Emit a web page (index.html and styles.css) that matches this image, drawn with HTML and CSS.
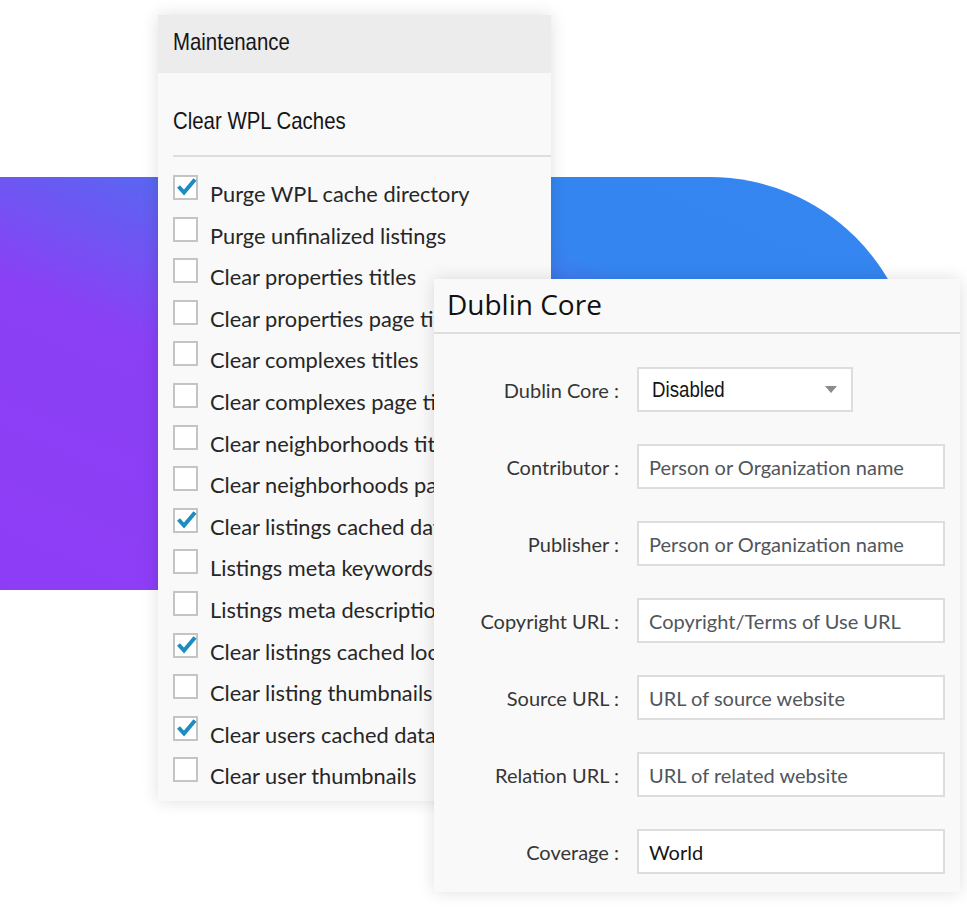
FILE: index.html
```html
<!DOCTYPE html>
<html lang="en">
<head>
<meta charset="utf-8">
<title>WPL Settings</title>
<link rel="stylesheet" href="styles.css">
</head>
<body>
<div class="stage">
  <div class="backdrop"></div>

  <section class="card maint">
    <header class="maint-head"><span class="narrow">Maintenance</span></header>
    <div class="maint-body">
      <h2 class="maint-title"><span class="narrow">Clear WPL Caches</span></h2>
      <ul class="checks">
        <li class="check-row"><span class="box checked"><svg viewBox="0 0 24 24" width="24" height="24"><path d="M3.5 11.5 L9 17.5 L20 4.5" /></svg></span><span class="check-label">Purge WPL cache directory</span></li>
        <li class="check-row"><span class="box"></span><span class="check-label">Purge unfinalized listings</span></li>
        <li class="check-row"><span class="box"></span><span class="check-label">Clear properties titles</span></li>
        <li class="check-row"><span class="box"></span><span class="check-label">Clear properties page titles</span></li>
        <li class="check-row"><span class="box"></span><span class="check-label">Clear complexes titles</span></li>
        <li class="check-row"><span class="box"></span><span class="check-label">Clear complexes page titles</span></li>
        <li class="check-row"><span class="box"></span><span class="check-label">Clear neighborhoods titles</span></li>
        <li class="check-row"><span class="box"></span><span class="check-label">Clear neighborhoods page titles</span></li>
        <li class="check-row"><span class="box checked"><svg viewBox="0 0 24 24" width="24" height="24"><path d="M3.5 11.5 L9 17.5 L20 4.5" /></svg></span><span class="check-label">Clear listings cached data</span></li>
        <li class="check-row"><span class="box"></span><span class="check-label">Listings meta keywords</span></li>
        <li class="check-row"><span class="box"></span><span class="check-label">Listings meta descriptions</span></li>
        <li class="check-row"><span class="box checked"><svg viewBox="0 0 24 24" width="24" height="24"><path d="M3.5 11.5 L9 17.5 L20 4.5" /></svg></span><span class="check-label">Clear listings cached locations</span></li>
        <li class="check-row"><span class="box"></span><span class="check-label">Clear listing thumbnails</span></li>
        <li class="check-row"><span class="box checked"><svg viewBox="0 0 24 24" width="24" height="24"><path d="M3.5 11.5 L9 17.5 L20 4.5" /></svg></span><span class="check-label">Clear users cached data</span></li>
        <li class="check-row"><span class="box"></span><span class="check-label">Clear user thumbnails</span></li>
      </ul>
    </div>
  </section>

  <section class="card dublin">
    <h1 class="dc-title">Dublin Core</h1>
    <form class="dc-form">
      <div class="dc-row">
        <label class="dc-label">Dublin Core :</label>
        <div class="dc-select"><span class="dc-select-text narrow">Disabled</span><svg class="dc-arrow" viewBox="0 0 12 7" width="12" height="7"><path d="M0 0 H12 L6 7 Z"/></svg></div>
      </div>
      <div class="dc-row">
        <label class="dc-label">Contributor :</label>
        <input class="dc-input" type="text" placeholder="Person or Organization name">
      </div>
      <div class="dc-row">
        <label class="dc-label">Publisher :</label>
        <input class="dc-input" type="text" placeholder="Person or Organization name">
      </div>
      <div class="dc-row">
        <label class="dc-label">Copyright URL :</label>
        <input class="dc-input" type="text" placeholder="Copyright/Terms of Use URL">
      </div>
      <div class="dc-row">
        <label class="dc-label">Source URL :</label>
        <input class="dc-input" type="text" placeholder="URL of source website">
      </div>
      <div class="dc-row">
        <label class="dc-label">Relation URL :</label>
        <input class="dc-input" type="text" placeholder="URL of related website">
      </div>
      <div class="dc-row">
        <label class="dc-label">Coverage :</label>
        <input class="dc-input" type="text" value="World">
      </div>
    </form>
  </section>
</div>
</body>
</html>
```

FILE: styles.css
```css
html, body {
  margin: 0;
  padding: 0;
  background: #ffffff;
}

.stage {
  position: relative;
  width: 967px;
  height: 907px;
  overflow: hidden;
  background: #ffffff;
}

.backdrop {
  position: absolute;
  left: 0;
  top: 177px;
  width: 916px;
  height: 413px;
  border-top-right-radius: 206px;
  background: linear-gradient(to top right, #8e3df6 0%, #8a40f5 38%, #5a66f1 58%, #3585f0 72%, #3486f0 100%);
}

.card {
  position: absolute;
  background: #f9f9f9;
  box-shadow: 0 0 16px rgba(0, 0, 0, 0.13);
}

/* condensed headline face (narrowed Arial metrics) */
.narrow {
  display: inline-block;
  font-family: "Liberation Sans", Arial, sans-serif;
  transform: scaleX(0.85);
  transform-origin: left center;
  white-space: nowrap;
}

/* Maintenance card */
.maint {
  left: 158px;
  top: 15px;
  width: 393px;
  height: 786px;
}

.maint-head {
  height: 58px;
  line-height: 54px;
  background: #ececec;
  padding-left: 15px;
  font-family: "Liberation Sans", Arial, sans-serif;
  font-size: 24px;
  color: #151515;
}

.maint-body {
  padding-left: 15px;
}

.maint-title {
  margin: 0;
  padding-top: 14px;
  height: 68px;
  line-height: 68px;
  border-bottom: 2px solid #dedede;
  font-family: "Liberation Sans", Arial, sans-serif;
  font-weight: normal;
  font-size: 24px;
  color: #151515;
}

.checks {
  list-style: none;
  margin: 0;
  padding: 16px 0 0 0;
}

.check-row {
  display: flex;
  align-items: flex-start;
  gap: 12px;
  height: 41.6px;
  white-space: nowrap;
}

.box {
  flex: none;
  width: 25px;
  height: 25px;
  margin-top: 2px;
  box-sizing: border-box;
  border: 2px solid #c4c4c4;
  background: #ffffff;
  position: relative;
}

.box svg {
  position: absolute;
  left: 0;
  top: -2px;
  fill: none;
  stroke: #1e8cbe;
  stroke-width: 4;
  stroke-linecap: butt;
  stroke-linejoin: miter;
}

.check-label {
  font-family: Lato, "Liberation Sans", sans-serif;
  font-size: 21.8px;
  line-height: 41.6px;
  color: #262626;
}

/* Dublin Core card */
.dublin {
  left: 434px;
  top: 279px;
  width: 526px;
  height: 613px;
}

.dc-title {
  margin: 0;
  height: 53px;
  line-height: 50px;
  padding-left: 13px;
  border-bottom: 2px solid #dedede;
  font-family: "Open Sans", "Noto Sans", sans-serif;
  font-weight: normal;
  font-size: 28px;
  color: #111111;
}

.dc-form {
  display: flex;
  flex-direction: column;
  gap: 32px;
  padding-top: 33px;
}

.dc-row {
  display: flex;
  align-items: center;
  gap: 18px;
  height: 45px;
}

.dc-label {
  flex: none;
  width: 185px;
  text-align: right;
  font-family: Lato, "Liberation Sans", sans-serif;
  font-size: 20px;
  color: #363636;
}

.dc-input {
  box-sizing: border-box;
  width: 308px;
  height: 45px;
  margin: 0;
  border: 2px solid #dddddd;
  background: #ffffff;
  padding: 0 0 0 10px;
  font-family: Lato, "Liberation Sans", sans-serif;
  font-size: 20px;
  color: #151515;
  outline: none;
}

.dc-input::placeholder {
  color: #51565c;
  opacity: 1;
}

.dc-select {
  box-sizing: border-box;
  width: 216px;
  height: 45px;
  border: 2px solid #dddddd;
  background: #ffffff;
  display: flex;
  align-items: center;
  justify-content: space-between;
  padding: 0 14px 0 13px;
}

.dc-select-text {
  font-size: 22px;
  color: #151515;
}

.dc-arrow {
  fill: #8a8a8a;
}
```
